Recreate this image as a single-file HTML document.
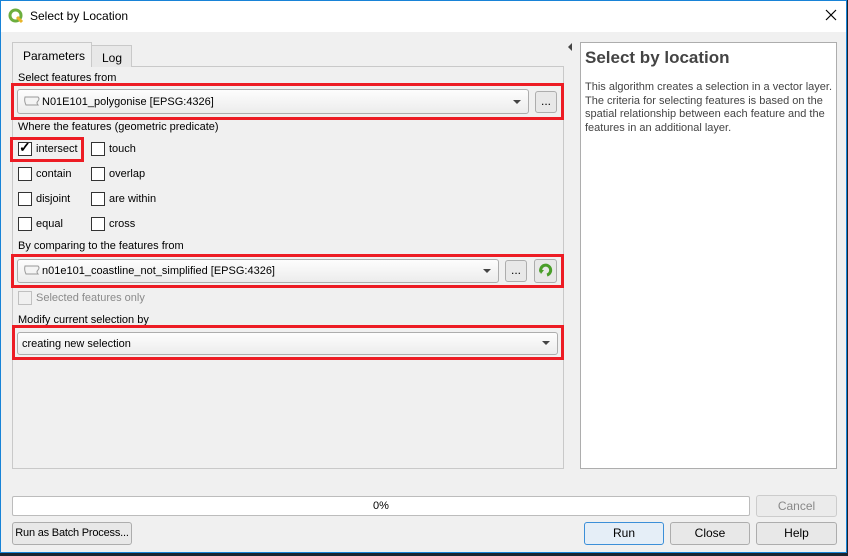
<!DOCTYPE html><html><head><style>
*{box-sizing:border-box;margin:0;padding:0}
html,body{width:848px;height:556px;overflow:hidden}
body{background:#1b2430;font-family:"Liberation Sans",sans-serif;font-size:11px;color:#000;position:relative}
.a{position:absolute;white-space:nowrap}
.win{left:0;top:0;width:847px;height:553px;background:#f0f0f0;border:1px solid #1883d7}
.title{left:1px;top:1px;width:845px;height:31px;background:#fff}
.cb{width:14px;height:14px;border:1px solid #333;background:#fff}
.cbl{font-size:11px}
.red{border:3px solid #ed1c24}
.combo{background:linear-gradient(#fdfdfd,#ececec);border:1px solid #adadad;border-radius:3px}
.btn{background:#e8e8e8;border:1px solid #adadad;border-radius:3px;text-align:center;font-size:12px}
.arr{width:0;height:0;border-left:4px solid transparent;border-right:4px solid transparent;border-top:4px solid #444}
</style></head><body>
<div class="a win"></div>
<div class="a title"></div>
<svg class="a" style="left:8px;top:8px" width="16" height="16" viewBox="0 0 16 16"><circle cx="7.5" cy="7.5" r="5.5" fill="none" stroke="#6cae3e" stroke-width="3"/><path d="M9 9 L14 14" stroke="#e8b52a" stroke-width="3"/></svg>
<div class="a" style="left:30px;top:9px;font-size:12px">Select by Location</div>
<svg class="a" style="left:825px;top:9px" width="12" height="12"><path d="M1 1 L11 11 M11 1 L1 11" stroke="#000" stroke-width="1.2"/></svg>

<div class="a" style="left:12px;top:66px;width:552px;height:403px;border:1px solid #c9c9c9;background:#f0f0f0"></div>
<div class="a" style="left:91px;top:45px;width:41px;height:22px;border:1px solid #c9c9c9;border-bottom:none;background:#e8e8e8;padding:5px 0 0 10px;font-size:12px">Log</div>
<div class="a" style="left:12px;top:42px;width:80px;height:25px;border:1px solid #c9c9c9;border-bottom:none;background:#f0f0f0;padding:6px 0 0 10px;font-size:12px">Parameters</div>

<div class="a" style="left:18px;top:72px">Select features from</div>
<div class="a red" style="left:11px;top:83px;width:553px;height:37px"></div>
<div class="a combo" style="left:17px;top:89px;width:512px;height:25px"></div>
<svg class="a" style="left:23px;top:96px" width="18" height="11"><path d="M2 1 L15 1 Q17 3 15 5 Q13 7 15 9 L3 9 Q1 5 2 1Z" fill="#f4f4f4" stroke="#999"/></svg>
<div class="a" style="left:42px;top:96px">N01E101_polygonise [EPSG:4326]</div>
<div class="a arr" style="left:513px;top:100px"></div>
<div class="a btn" style="left:535px;top:91px;width:22px;height:22px;line-height:18px">...</div>

<div class="a" style="left:18px;top:121px">Where the features (geometric predicate)</div>
<div class="a red" style="left:10px;top:137px;width:74px;height:25px"></div>
<div class="a cb" style="left:18px;top:142px"></div><div class="a" style="left:19px;top:139px;font-size:14px;font-weight:bold">✓</div><div class="a cbl" style="left:36px;top:143px">intersect</div>
<div class="a cb" style="left:91px;top:142px"></div><div class="a cbl" style="left:109px;top:143px">touch</div>
<div class="a cb" style="left:18px;top:167px"></div><div class="a cbl" style="left:36px;top:168px">contain</div>
<div class="a cb" style="left:91px;top:167px"></div><div class="a cbl" style="left:109px;top:168px">overlap</div>
<div class="a cb" style="left:18px;top:192px"></div><div class="a cbl" style="left:36px;top:193px">disjoint</div>
<div class="a cb" style="left:91px;top:192px"></div><div class="a cbl" style="left:109px;top:193px">are within</div>
<div class="a cb" style="left:18px;top:217px"></div><div class="a cbl" style="left:36px;top:218px">equal</div>
<div class="a cb" style="left:91px;top:217px"></div><div class="a cbl" style="left:109px;top:218px">cross</div>

<div class="a" style="left:18px;top:240px">By comparing to the features from</div>
<div class="a red" style="left:11px;top:254px;width:553px;height:34px"></div>
<div class="a combo" style="left:17px;top:259px;width:482px;height:24px"></div>
<svg class="a" style="left:23px;top:265px" width="18" height="11"><path d="M2 1 L15 1 Q17 3 15 5 Q13 7 15 9 L3 9 Q1 5 2 1Z" fill="#f4f4f4" stroke="#999"/></svg>
<div class="a" style="left:42px;top:265px">n01e101_coastline_not_simplified [EPSG:4326]</div>
<div class="a arr" style="left:483px;top:269px"></div>
<div class="a btn" style="left:505px;top:260px;width:22px;height:22px;line-height:18px">...</div>
<div class="a btn" style="left:534px;top:259px;width:23px;height:24px"></div>
<svg class="a" style="left:538px;top:263px" width="15" height="15" viewBox="0 0 15 15"><path d="M3 9 A5 5 0 1 1 9 12" fill="none" stroke="#4a9e2a" stroke-width="3"/><path d="M1 7 L6 7 L3 11Z" fill="#4a9e2a"/></svg>

<div class="a cb" style="left:18px;top:291px;border-color:#c0c0c0;background:#f0f0f0"></div><div class="a" style="left:36px;top:292px;color:#8a8a8a">Selected features only</div>
<div class="a" style="left:18px;top:314px">Modify current selection by</div>
<div class="a red" style="left:12px;top:325px;width:552px;height:35px"></div>
<div class="a combo" style="left:17px;top:332px;width:541px;height:23px"></div>
<div class="a" style="left:22px;top:338px">creating new selection</div>
<div class="a arr" style="left:542px;top:341px"></div>

<div class="a" style="left:568px;top:43px;width:0;height:0;border-top:4px solid transparent;border-bottom:4px solid transparent;border-right:4px solid #444"></div>
<div class="a" style="left:580px;top:42px;width:257px;height:427px;background:#fff;border:1px solid #adadad"></div>
<div class="a" style="left:585px;top:48px;font-size:17px;font-weight:bold;color:#444">Select by location</div>
<div class="a" style="left:585px;top:81px;width:250px;font-size:11px;line-height:13.5px;color:#444;white-space:normal">This algorithm creates a selection in a vector layer. The criteria for selecting features is based on the spatial relationship between each feature and the features in an additional layer.</div>

<div class="a" style="left:12px;top:496px;width:738px;height:20px;background:#fff;border:1px solid #bcbcbc;border-radius:2px;text-align:center;line-height:18px">0%</div>
<div class="a btn" style="left:756px;top:495px;width:81px;height:22px;line-height:20px;color:#888;background:#ebebeb;border-color:#ccc">Cancel</div>
<div class="a btn" style="left:12px;top:522px;width:120px;height:23px;line-height:21px;font-size:11px;letter-spacing:-0.2px">Run as Batch Process...</div>
<div class="a btn" style="left:584px;top:522px;width:80px;height:23px;line-height:21px;border-color:#3c8fd8;background:#e5eef7">Run</div>
<div class="a btn" style="left:670px;top:522px;width:80px;height:23px;line-height:21px">Close</div>
<div class="a btn" style="left:756px;top:522px;width:81px;height:23px;line-height:21px">Help</div>
</body></html>
